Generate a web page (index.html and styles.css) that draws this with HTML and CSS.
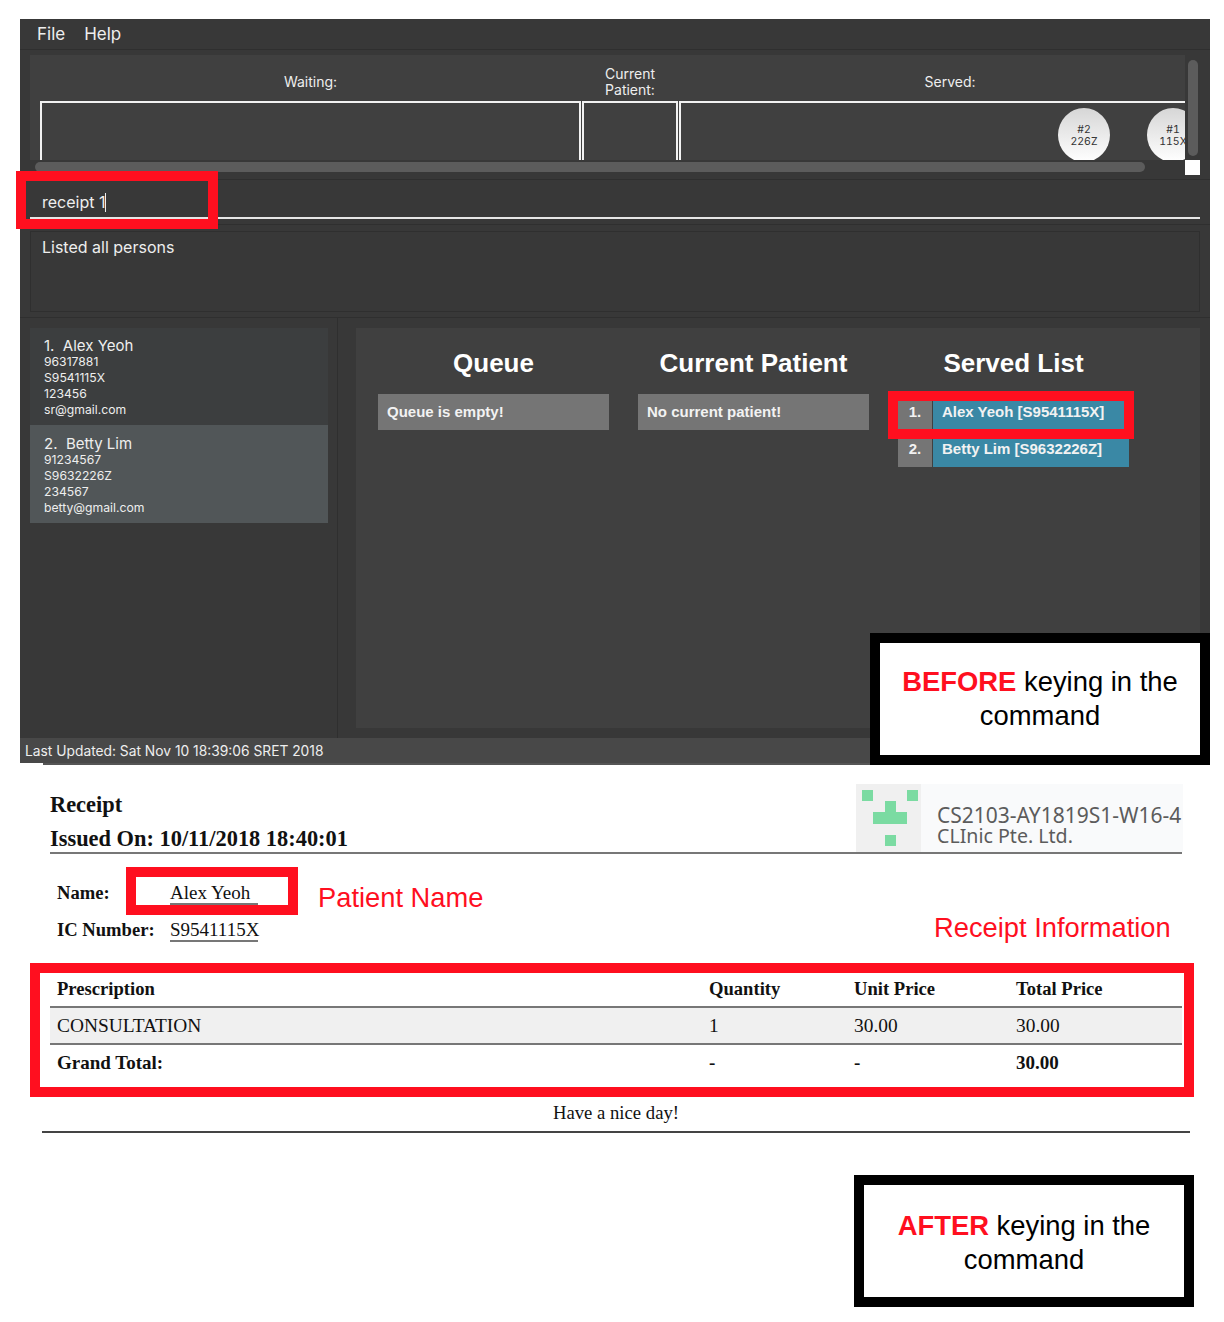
FILE: index.html
```html
<!DOCTYPE html>
<html lang="en">
<head>
    <meta charset="UTF-8">
    <meta name="viewport" content="width=device-width, initial-scale=1.0">
    <title>Receipt command</title>
    <link rel="stylesheet" href="styles.css">
</head>
<body>

    <div class="app">
        <div class="menu-bar">
            <span>File</span>
            <span>Help</span>
        </div>

        <div class="queue-pane">
            <div class="queue-view">
                <div class="lanes">
                    <div class="lane lane-waiting">
                        <div class="lane-label">Waiting:</div>
                        <div class="lane-box"></div>
                    </div>
                    <div class="lane lane-current">
                        <div class="lane-label">Current Patient:</div>
                        <div class="lane-box"></div>
                    </div>
                    <div class="lane lane-served">
                        <div class="lane-label">Served:</div>
                        <div class="lane-box chips">
                            <div class="chip">#2<br>226Z</div>
                            <div class="chip">#1<br>115X</div>
                        </div>
                    </div>
                </div>
            </div>
            <div class="scroll-rail-v"><div class="scroll-thumb-v"></div></div>
            <div class="scroll-rail-h"><div class="scroll-thumb-h"></div></div>
            <div class="scroll-corner"></div>
        </div>

        <div class="command-pane">
            <div class="command-input">receipt 1<span class="caret"></span></div>
        </div>

        <div class="result-pane">
            <div class="result-box">Listed all persons</div>
        </div>

        <div class="main-pane">
            <div class="person-list">
                <div class="person-card">
                    <div class="person-name">1.&nbsp; Alex Yeoh</div>
                    <div>96317881</div>
                    <div>S9541115X</div>
                    <div>123456</div>
                    <div>sr@gmail.com</div>
                </div>
                <div class="person-card selected">
                    <div class="person-name">2.&nbsp; Betty Lim</div>
                    <div>91234567</div>
                    <div>S9632226Z</div>
                    <div>234567</div>
                    <div>betty@gmail.com</div>
                </div>
            </div>
            <div class="board">
                <div class="board-col">
                    <h2>Queue</h2>
                    <div class="notice">Queue is empty!</div>
                </div>
                <div class="board-col">
                    <h2>Current Patient</h2>
                    <div class="notice">No current patient!</div>
                </div>
                <div class="board-col">
                    <h2>Served List</h2>
                    <div class="served-row">
                        <div class="served-num">1.</div>
                        <div class="served-name">Alex Yeoh [S9541115X]</div>
                    </div>
                    <div class="served-row">
                        <div class="served-num">2.</div>
                        <div class="served-name">Betty Lim [S9632226Z]</div>
                    </div>
                </div>
            </div>
        </div>

        <div class="status-bar">Last Updated: Sat Nov 10 18:39:06 SRET 2018</div>

        <div class="mark mark-command"></div>
        <div class="mark mark-served"></div>
        <div class="caption caption-before"><b>BEFORE</b> keying in the command</div>
    </div>

    <div class="shot-edge"></div>

    <div class="receipt">
        <div class="receipt-head">
            <div class="receipt-title">
                <div>Receipt</div>
                <div>Issued On: 10/11/2018 18:40:01</div>
            </div>
            <div class="logo">
                <div class="logo-mark">
                    <svg width="65" height="68" viewBox="0 0 65 68">
                        <rect x="6" y="6" width="11" height="11" fill="#7bdba2"/>
                        <rect x="51" y="6" width="11" height="11" fill="#7bdba2"/>
                        <rect x="29" y="17" width="11" height="12" fill="#7bdba2"/>
                        <rect x="17" y="28" width="34" height="12" fill="#7bdba2"/>
                        <rect x="29" y="51" width="11" height="11" fill="#7bdba2"/>
                    </svg>
                </div>
                <div class="logo-text">
                    <div>CS2103-AY1819S1-W16-4</div>
                    <div class="logo-sub">CLInic Pte. Ltd.</div>
                </div>
            </div>
        </div>

        <div class="patient">
            <div class="patient-row">
                <span class="patient-label">Name:</span>
                <span class="patient-value">Alex Yeoh</span>
                <span class="note note-name">Patient Name</span>
            </div>
            <div class="patient-row">
                <span class="patient-label">IC Number:</span>
                <span class="patient-value">S9541115X</span>
                <span class="note note-info">Receipt Information</span>
            </div>
        </div>

        <table class="items">
            <thead>
                <tr>
                    <th class="col-name">Prescription</th>
                    <th class="col-qty">Quantity</th>
                    <th class="col-unit">Unit Price</th>
                    <th>Total Price</th>
                </tr>
            </thead>
            <tbody>
                <tr class="item-row">
                    <td>CONSULTATION</td>
                    <td>1</td>
                    <td>30.00</td>
                    <td>30.00</td>
                </tr>
                <tr class="total-row">
                    <td>Grand Total:</td>
                    <td>-</td>
                    <td>-</td>
                    <td>30.00</td>
                </tr>
            </tbody>
        </table>

        <div class="thanks">Have a nice day!</div>

        <div class="mark mark-name"></div>
        <div class="mark mark-table"></div>
    </div>

    <div class="caption caption-after"><b>AFTER</b> keying in the command</div>

</body>
</html>
```

FILE: styles.css
```css
body {
    margin: 0;
    background: white;
    font-family: "Inter", sans-serif;
    position: relative;
    height: 1322px;
    overflow: hidden;
}

.app {
    margin: 19px 14px 0 20px;
    height: 744px;
    background: #383838;
    color: #eeeeee;
    display: flex;
    flex-direction: column;
    position: relative;
}

/* menu */
.menu-bar {
    height: 31px;
    box-sizing: border-box;
    border-bottom: 1px solid #2f2f2f;
    padding-left: 17px;
    display: flex;
    align-items: center;
    gap: 19px;
    font-size: 17px;
}

/* queue strip */
.queue-pane {
    height: 130px;
    box-sizing: border-box;
    padding: 5px 10px 0;
    display: grid;
    grid-template-columns: 1155px 15px;
    grid-template-rows: 105px 15px;
    border-bottom: 1px solid #2f2f2f;
}

.queue-view {
    background: #404040;
    overflow: hidden;
    padding-left: 10px;
}

.lanes {
    display: flex;
    gap: 1px;
}

.lane {
    flex: none;
}

.lane-label {
    height: 46px;
    display: flex;
    align-items: center;
    justify-content: center;
    text-align: center;
    font-size: 14px;
    line-height: 16px;
    padding-top: 8px;
    box-sizing: border-box;
}

.lane-box {
    height: 59px;
    box-sizing: border-box;
    border: 2px solid #f2f2f2;
    border-bottom: none;
}

.lane-waiting {
    width: 541px;
}

.lane-current {
    width: 96px;
}

.lane-current .lane-label {
    padding: 8px 18px 0;
}

.lane-served {
    width: 510px;
}

.lane-served .lane-label {
    padding-left: 32px;
}

.chips {
    border-right: none;
    display: flex;
    gap: 37px;
    padding: 5px 0 0 377px;
    overflow: hidden;
}

.chip {
    flex: none;
    width: 52px;
    height: 54px;
    border-radius: 50%;
    background: linear-gradient(#d6d6d6, #ffffff);
    color: #333333;
    font-size: 10.5px;
    font-variant-numeric: tabular-nums;
    line-height: 12px;
    text-align: center;
    padding-top: 16px;
    box-sizing: border-box;
}

.scroll-rail-v {
    padding: 5px 2px 0 3px;
}

.scroll-thumb-v {
    height: 96px;
    background: #5c5c5c;
    border-radius: 5px;
}

.scroll-rail-h {
    padding: 2px 40px 0 5px;
}

.scroll-thumb-h {
    height: 10px;
    background: #5c5c5c;
    border-radius: 5px;
}

.scroll-corner {
    background: white;
}

/* command box */
.command-pane {
    height: 44px;
    box-sizing: border-box;
    padding: 0 10px;
}

.command-input {
    height: 39px;
    box-sizing: border-box;
    border-bottom: 2px solid #e6e6e6;
    padding: 11px 0 0 12px;
    font-size: 16px;
    line-height: 22px;
}

.caret {
    display: inline-block;
    width: 1px;
    height: 19px;
    background: #eeeeee;
    vertical-align: -4px;
}

/* result box */
.result-pane {
    height: 94px;
    box-sizing: border-box;
    padding: 6px 10px 5px;
    border-top: 1px solid #2f2f2f;
    border-bottom: 1px solid #2f2f2f;
}

.result-box {
    height: 100%;
    box-sizing: border-box;
    border: 1px solid #2f2f2f;
    padding: 4px 11px;
    font-size: 16px;
    line-height: 22px;
}

/* person list and board */
.main-pane {
    flex: 1;
    display: flex;
}

.person-list {
    width: 318px;
    box-sizing: border-box;
    padding: 10px 9px 0 10px;
    border-right: 1px solid #2f2f2f;
    font-size: 12.2px;
    line-height: 16px;
}

.person-card {
    background: #3c3e3f;
    padding: 9px 14px 0;
    height: 97px;
    box-sizing: border-box;
}

.person-card.selected {
    background: #515658;
    height: 98px;
    padding-top: 10px;
}

.person-name {
    font-size: 15px;
    line-height: 17px;
}

.board {
    flex: 1;
    margin: 10px 10px 10px 18px;
    background: #404040;
    padding-left: 22px;
    display: flex;
    gap: 29px;
    font-family: "Liberation Sans", sans-serif;
}

.board-col {
    width: 231px;
}

.board-col h2 {
    margin: 0;
    height: 66px;
    box-sizing: border-box;
    padding-top: 19px;
    font-size: 26px;
    line-height: 32px;
    text-align: center;
    color: white;
}

.notice {
    height: 36px;
    background: #757575;
    padding: 0 9px;
    font-size: 15px;
    font-weight: bold;
    line-height: 35px;
    color: #f2f2f2;
}

.served-row {
    height: 37px;
    display: flex;
    font-size: 15px;
    font-weight: bold;
    line-height: 36px;
    color: #f2f2f2;
}

.served-row + .served-row {
    height: 36px;
}

.served-num {
    width: 34px;
    background: #757575;
    text-align: center;
    margin-right: 1px;
}

.served-name {
    flex: 1;
    background: #3a88a5;
    padding-left: 9px;
}

.status-bar {
    height: 25px;
    background: #484848;
    padding-left: 5px;
    font-size: 13.8px;
    line-height: 26px;
}

.shot-edge {
    margin: 0 34px 0 43px;
    height: 2px;
    background: #555555;
}

/* annotations */
.mark {
    position: absolute;
    box-sizing: border-box;
    border: 10px solid #ff0f1f;
}

.mark-command {
    left: -4px;
    top: 152px;
    width: 202px;
    height: 58px;
}

.mark-served {
    left: 868px;
    top: 372px;
    width: 246px;
    height: 48px;
}

.caption {
    box-sizing: border-box;
    width: 340px;
    height: 132px;
    border: 10px solid black;
    background: white;
    padding: 22px 20px 0;
    text-align: center;
    font-family: "Liberation Sans", sans-serif;
    font-size: 27.4px;
    line-height: 34px;
    color: black;
}

.caption b {
    color: #ff0f1f;
}

.caption-before {
    position: absolute;
    left: 850px;
    top: 614px;
}

.caption-after {
    margin: 42px 0 0 854px;
    padding-top: 24px;
}

/* receipt */
.receipt {
    margin: 0 42px 0 50px;
    font-family: "Liberation Serif", serif;
    color: #111111;
}

.receipt-head {
    height: 89px;
    display: flex;
    justify-content: space-between;
    align-items: flex-end;
    border-bottom: 2px solid #777777;
    box-sizing: border-box;
}

.receipt-title {
    display: flex;
    flex-direction: column;
    gap: 8px;
    font-size: 22.4px;
    font-weight: bold;
    line-height: 26px;
}

.logo {
    display: flex;
    width: 327px;
    height: 68px;
    margin-right: -1px;
    background: #f9fafb;
}

.logo-mark {
    width: 65px;
    height: 68px;
    background: #f0f0f0;
}

.logo-text {
    padding: 21px 0 0 16px;
    font-family: "Noto Sans", sans-serif;
    font-size: 21px;
    line-height: 21px;
    color: #5c5c5c;
    white-space: nowrap;
}

.logo-sub {
    font-size: 19.6px;
    line-height: 20px;
}

.patient {
    padding: 23px 0 0 7px;
    height: 92px;
    box-sizing: border-box;
}

.patient-row {
    height: 37px;
    display: flex;
    font-size: 19px;
}

.patient-label {
    flex: none;
    width: 113px;
    font-size: 18.6px;
    font-weight: bold;
    line-height: 32px;
}

.patient-value {
    flex: none;
    width: 88px;
    height: 28px;
    line-height: 32px;
    border-bottom: 2px solid #777777;
    box-sizing: border-box;
    white-space: nowrap;
}

.note {
    font-family: "Liberation Sans", sans-serif;
    font-size: 27.3px;
    line-height: 34px;
    color: #ff0f1f;
    white-space: nowrap;
}

.note-name {
    margin: 4px 0 0 60px;
}

.note-info {
    margin: -3px 0 0 676px;
}

.items {
    width: 1132px;
    margin-top: 24px;
    border-collapse: collapse;
    table-layout: fixed;
    font-size: 19px;
}

.items th,
.items td {
    padding: 0 0 0 7px;
    text-align: left;
}

.items th {
    height: 34px;
    padding-top: 2px;
    font-size: 18.6px;
    border-bottom: 2px solid #777777;
}

.col-name {
    width: 645px;
}

.col-qty {
    width: 138px;
}

.col-unit {
    width: 155px;
}

.item-row td {
    height: 35px;
    font-size: 19.4px;
    background: #f0f0f0;
    border-bottom: 2px solid #777777;
}

.total-row td {
    height: 36px;
    font-weight: bold;
}

.thanks {
    margin: 21px -8px 0 -8px;
    height: 29px;
    border-bottom: 2px solid #444444;
    text-align: center;
    font-size: 18.7px;
}

.mark-name {
    left: 126px;
    top: 867px;
    width: 172px;
    height: 48px;
}

.mark-table {
    left: 30px;
    top: 963px;
    width: 1164px;
    height: 134px;
}
```
